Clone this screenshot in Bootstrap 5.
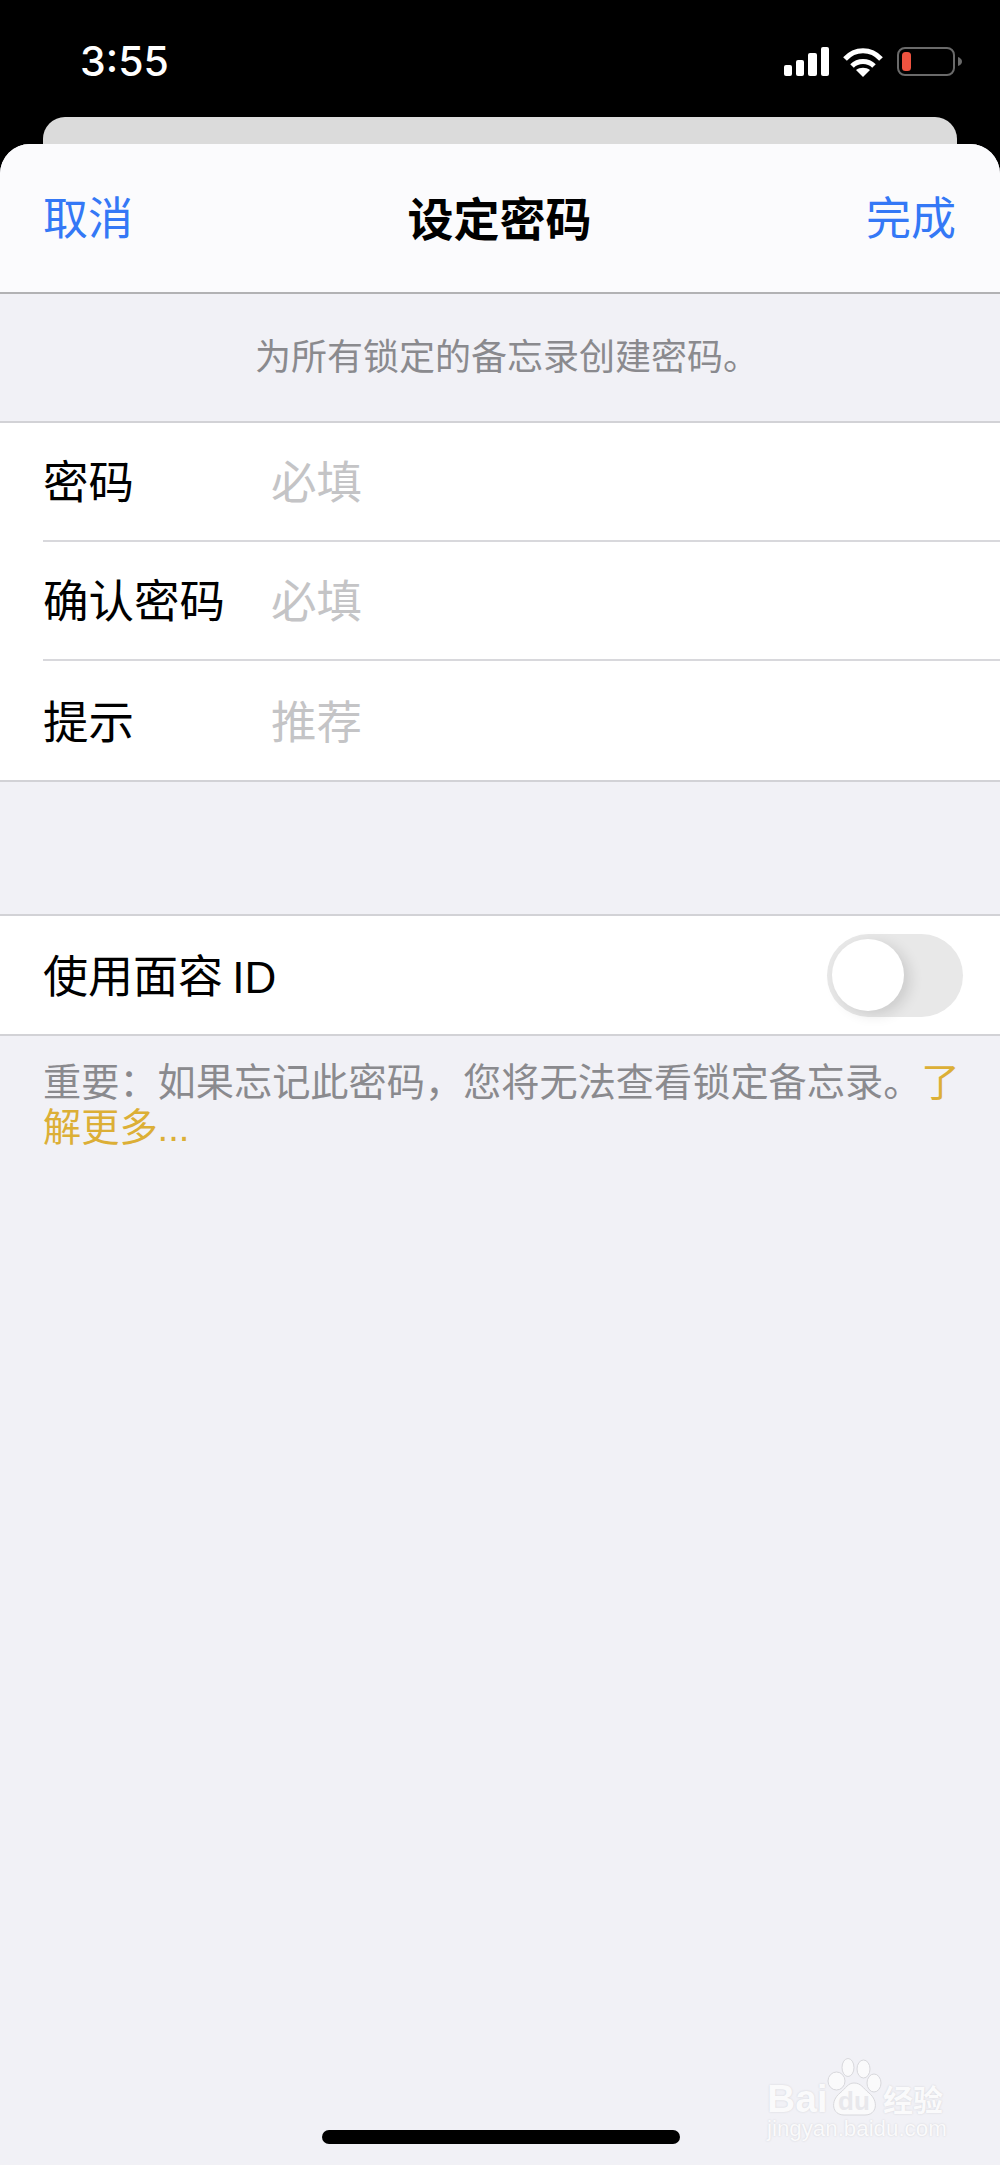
<!DOCTYPE html>
<html lang="zh-CN">
<head>
  <meta charset="UTF-8">
  <meta name="viewport" content="width=device-width, initial-scale=1.0">
  <title>设定密码</title>
  <link href="https://cdn.jsdelivr.net/npm/bootstrap@5.3.3/dist/css/bootstrap.min.css" rel="stylesheet">
  <style>
    html, body {
      height: 100%;
      margin: 0;
      background: #000;
      font-family: "Noto Sans CJK SC", "Liberation Sans", sans-serif;
    }

    .phone {
      width: 1000px;
      height: 2165px;
      position: relative;
      overflow: hidden;
      background: #000;
    }

    .status-bar {
      height: 117px;
      padding: 40px 38px 0 80px;
    }

    .status-time {
      font-family: Inter, "Liberation Sans", sans-serif;
      font-size: 41px;
      font-weight: 500;
      line-height: 42px;
      color: #fff;
    }

    .status-icons {
      gap: 14px;
      padding-top: 7px;
    }

    .back-sheet {
      height: 27px;
      margin: 0 43px;
      background: #dbdbdb;
      border-radius: 22px 22px 0 0;
    }

    .sheet {
      height: 2021px;
      background: #f1f1f6;
      border-radius: 30px 30px 0 0;
      overflow: hidden;
    }

    .sheet-head {
      height: 150px;
      padding: 0 44px 4px 43px;
      background: #fbfbfd;
      border-bottom: 2px solid #b2b2b4;
      font-size: 45px;
    }

    .sheet-link { color: #3478f6; }
    .sheet-title { color: #000; font-size: 46px; font-weight: 700; }

    .hint-top {
      height: 127px;
      padding: 35px 0 0 14px;
      font-size: 36px;
      line-height: 50px;
      color: #8a8a8e;
      text-align: center;
    }

    .form-group-box {
      background: #fff;
      border-top: 2px solid #d2d2d6;
      border-bottom: 2px solid #d2d2d6;
    }

    .form-line {
      height: 119px;
      font-size: 45.500px;
      color: #000;
      margin-left: 43px;
      padding-bottom: 4px;
    }

    .form-line:first-child { height: 117px; }
    .form-line:last-child { height: 121px; padding-bottom: 2px; }
    .form-line + .form-line { border-top: 2px solid #d8d8dc; }
    .form-line-name { width: 228px; flex: none; }
    .form-line-hint { color: #c4c4c6; }

    .group-gap { height: 132px; }

    .face-line {
      height: 118px;
      padding: 0 37px 0 43px;
      font-size: 45px;
      color: #000;
    }

    .face-id {
      font-family: "Liberation Sans", sans-serif;
      font-size: 44px;
      word-spacing: -3px;
    }

    .toggle-track {
      width: 136px;
      height: 83px;
      position: relative;
      background: #e8e8e8;
      border-radius: 42px;
    }

    .toggle-knob {
      width: 72px;
      height: 72px;
      position: absolute;
      left: 5px;
      top: 5px;
      background: #fff;
      border-radius: 50%;
      box-shadow: 6px 4px 14px rgba(0, 0, 0, .12);
    }

    .note {
      padding: 24px 30px 0 43px;
      font-family: "Liberation Sans", "Noto Sans CJK SC", sans-serif;
      font-size: 38.200px;
      line-height: 45px;
      color: #8a8a8e;
    }

    .note-link { color: #dcaf36; }

    .home-bar {
      width: 358px;
      height: 14px;
      position: absolute;
      left: 322px;
      top: 2130px;
      background: #000;
      border-radius: 7px;
    }

    .mark-logo {
      position: absolute;
      left: 767px;
      top: 2056px;
      width: 190px;
      height: 100px;
      color: #fafafb;
      text-shadow: 0 0 2px #d0d0d5;
    }

    .mark-logo svg { position: absolute; left: 60px; top: 2px; }
    .mark-bai { position: absolute; left: 0; top: 18px; font: 700 39px/50px "Liberation Sans", sans-serif; }
    .mark-du { position: absolute; left: 71px; top: 30px; font: 700 26px/30px "Liberation Sans", sans-serif; color: #e8e8ec; text-shadow: none; }
    .mark-cn { position: absolute; left: 116px; top: 17px; font: 700 30px/50px "Noto Sans CJK SC", sans-serif; white-space: nowrap; }
    .mark-url { position: absolute; left: 0; top: 58px; font: 400 22.300px/30px "Liberation Sans", sans-serif; white-space: nowrap; }
  </style>
</head>
<body>
  <div class="phone">
    <div class="status-bar d-flex justify-content-between">
      <span class="status-time">3:55</span>
      <div class="status-icons d-flex align-items-start">
        <svg width="45" height="29" viewBox="0 0 45 29" fill="#fff">
          <rect x="0" y="18" width="8" height="11" rx="2"/>
          <rect x="12" y="13" width="8" height="16" rx="2"/>
          <rect x="24" y="6" width="9" height="23" rx="2"/>
          <rect x="37" y="0" width="8" height="29" rx="2"/>
        </svg>
        <svg width="40" height="30" viewBox="0 0 40 30" fill="none" stroke="#fff" stroke-width="5">
          <path d="M2 12C12 1 28 1 38 12"/>
          <path d="M9 19C15 13 25 13 31 19"/>
          <path d="M20 30L13 23C17 20 23 20 27 23Z" fill="#fff" stroke="none"/>
        </svg>
        <svg width="65" height="29" viewBox="0 0 65 29">
          <rect x="1" y="1" width="56" height="27" rx="7" fill="none" stroke="#6a6a6a" stroke-width="2"/>
          <rect x="5" y="5" width="9" height="19" rx="3.500" fill="#ee5340"/>
          <path d="M61 10C63.500 11 65 12.500 65 14.500C65 16.500 63.500 18 61 19Z" fill="#6a6a6a"/>
        </svg>
      </div>
    </div>
    <div class="back-sheet"></div>
    <div class="sheet">
      <div class="sheet-head d-flex justify-content-between align-items-center">
        <span class="sheet-link">取消</span>
        <span class="sheet-title">设定密码</span>
        <span class="sheet-link">完成</span>
      </div>
      <div class="hint-top">为所有锁定的备忘录创建密码。</div>
      <div class="form-group-box">
        <div class="form-line d-flex align-items-center">
          <span class="form-line-name">密码</span><span class="form-line-hint">必填</span>
        </div>
        <div class="form-line d-flex align-items-center">
          <span class="form-line-name">确认密码</span><span class="form-line-hint">必填</span>
        </div>
        <div class="form-line d-flex align-items-center">
          <span class="form-line-name">提示</span><span class="form-line-hint">推荐</span>
        </div>
      </div>
      <div class="group-gap"></div>
      <div class="form-group-box">
        <div class="face-line d-flex justify-content-between align-items-center">
          <span>使用面容<span class="face-id"> ID</span></span>
          <div class="toggle-track"><div class="toggle-knob"></div></div>
        </div>
      </div>
      <div class="note">重要：如果忘记此密码，您将无法查看锁定备忘录。<span class="note-link">了</span><br><span class="note-link">解更多...</span></div>
    </div>
    <div class="home-bar"></div>
    <div class="mark-logo">
      <svg width="56" height="58" viewBox="0 0 56 58" fill="#fafafb" stroke="#d8d8dc" stroke-width="1">
        <ellipse cx="9.500" cy="23" rx="8.500" ry="9"/>
        <ellipse cx="21" cy="9.500" rx="6" ry="9"/>
        <ellipse cx="36.500" cy="11" rx="6.500" ry="9"/>
        <ellipse cx="47" cy="25" rx="7" ry="9"/>
        <path d="M27 25C34 25 36 30 42 35C52 43 50 57 38 57L17 57C5 57 3 43 13 35C19 30 21 25 27 25Z"/>
      </svg>
      <span class="mark-bai">Bai</span>
      <span class="mark-du">du</span>
      <span class="mark-cn">经验</span>
      <span class="mark-url">jingyan.baidu.com</span>
    </div>
  </div>
</body>
</html>
